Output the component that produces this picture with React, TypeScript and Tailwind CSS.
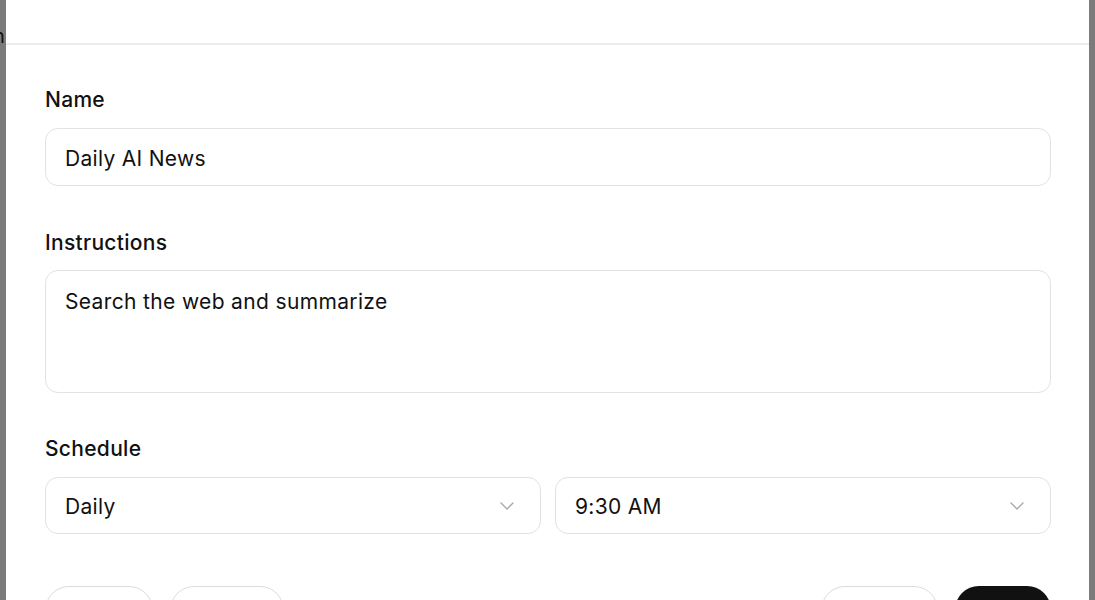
import { ChevronDown } from 'lucide-react';

const font = { fontFamily: 'Inter, "Noto Sans", sans-serif' };

function Select({ value }: { value: string }) {
  return (
    <div className="flex-1 h-[57px] flex items-center justify-between pl-[19px] pr-[21px] pt-[2px] rounded-[13px] border border-[#e2e2e2] bg-white">
      <span className="text-[21px] tracking-[0.3px] text-[#111]">{value}</span>
      <ChevronDown className="w-[24px] h-[24px] -mt-[2px] text-[#a8a8a8]" strokeWidth={1.4} />
    </div>
  );
}

export default function App() {
  return (
    <div className="relative w-full h-[600px] overflow-hidden bg-[#7b7b7b] flex" style={font}>
      {/* page text behind the overlay */}
      <span className="absolute left-[-7px] top-[21px] text-[20px] text-[#111]">n</span>

      <div className="ml-[6px] mr-[6px] flex-1 bg-white flex flex-col">
        <div className="h-[45px] shrink-0 border-b-2 border-[#ececec]" />

        <div className="pl-[39px] pr-[38px] pt-[41px] flex flex-col">
          <label className="text-[21px] font-medium tracking-[0.3px] leading-[28px] text-[#111] mb-[14px]">Name</label>
          <div className="h-[58px] flex items-center pl-[19px] pt-[3px] rounded-[13px] border border-[#e2e2e2]">
            <span className="text-[21px] tracking-[0.3px] text-[#111]">Daily AI News</span>
          </div>

          <label className="mt-[43px] text-[21px] font-medium tracking-[0.3px] leading-[28px] text-[#111] mb-[13px]">Instructions</label>
          <div className="h-[123px] pl-[19px] pt-[17px] rounded-[13px] border border-[#e2e2e2]">
            <span className="text-[21px] tracking-[0.35px] leading-[28px] text-[#111]">Search the web and summarize</span>
          </div>

          <label className="mt-[42px] text-[21px] font-medium tracking-[0.3px] leading-[28px] text-[#111] mb-[14px]">Schedule</label>
          <div className="flex gap-[14px]">
            <Select value="Daily" />
            <Select value="9:30 AM" />
          </div>

          <div className="mt-[52px] flex items-center justify-between">
            <div className="flex gap-[17px]">
              <button className="w-[108px] h-[48px] rounded-full border border-[#dcdcdc] text-[17px] text-[#111]">Run</button>
              <button className="w-[114px] h-[48px] rounded-full border border-[#dcdcdc] text-[17px] text-[#111]">Delete</button>
            </div>
            <div className="flex gap-[17px]">
              <button className="w-[117px] h-[48px] rounded-full border border-[#dcdcdc] text-[17px] text-[#111]">Cancel</button>
              <button className="w-[96px] h-[48px] rounded-full bg-[#111] text-[17px] text-white">Save</button>
            </div>
          </div>
        </div>
      </div>
    </div>
  );
}
